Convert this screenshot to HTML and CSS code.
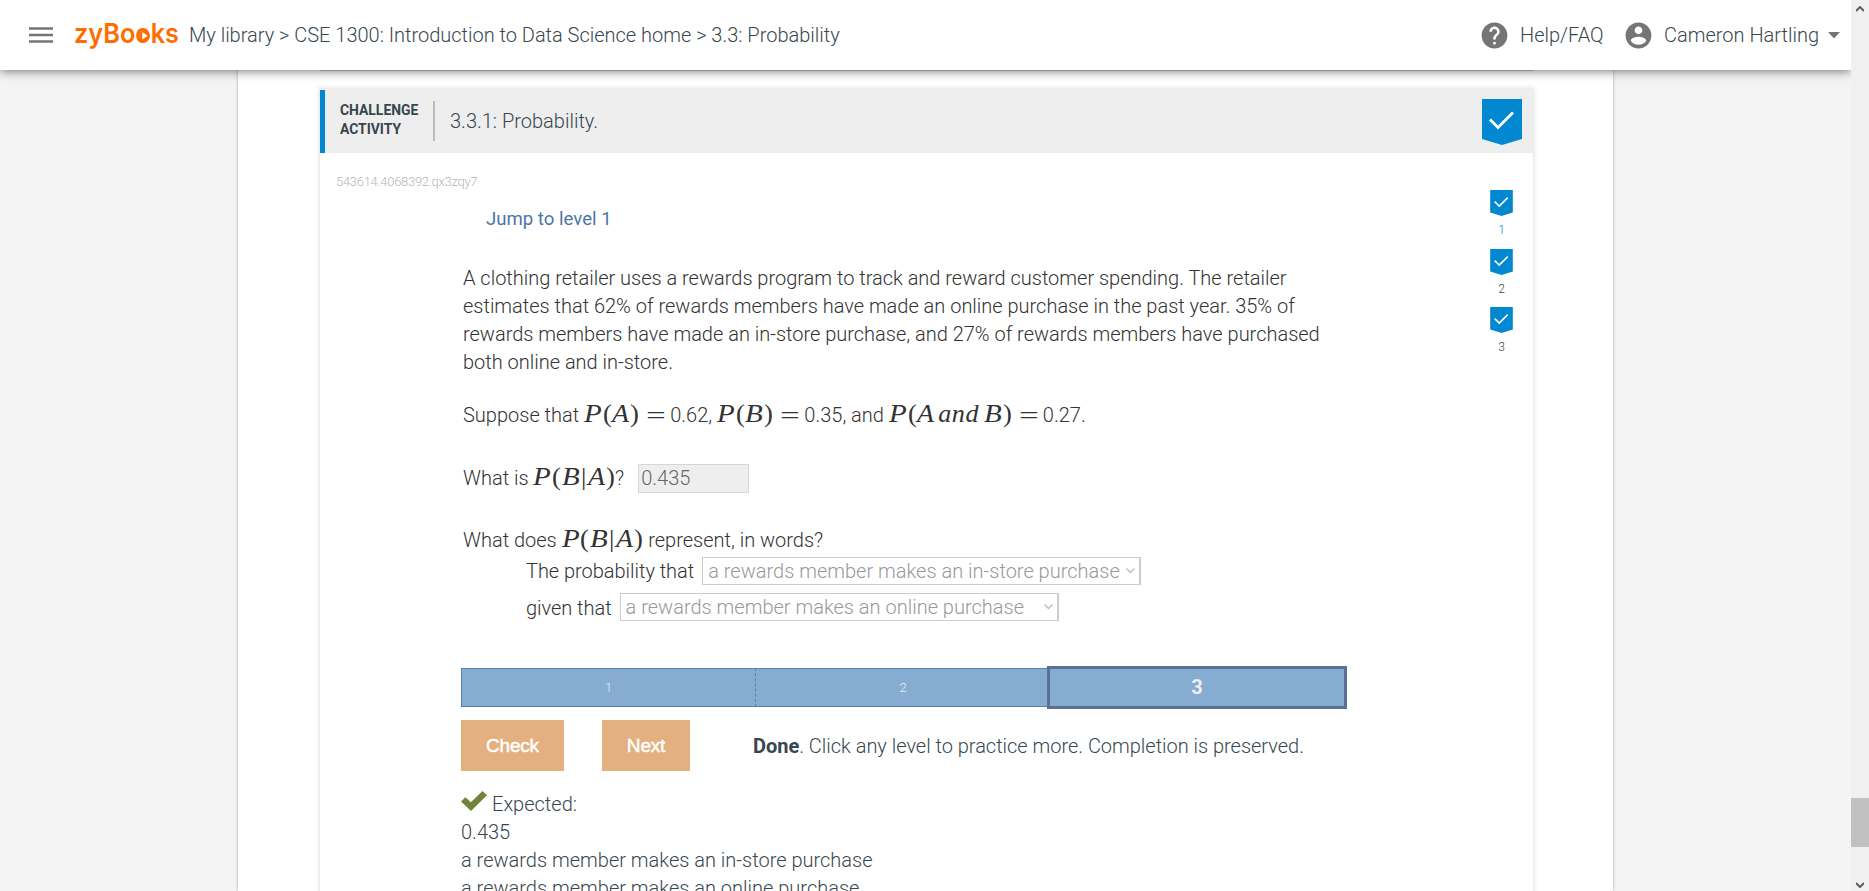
FILE: index.html
```html
<!DOCTYPE html>
<html lang="en">
<head>
<meta charset="utf-8">
<title>3.3: Probability</title>
<link rel="stylesheet" href="styles.css">
</head>
<body>
<svg width="0" height="0" class="defs">
  <symbol id="ribbon" viewBox="0 0 40 46"><path d="M0 0h40v40l-20 6-20-6z" fill="#0288d1"/><path d="M8 20.500l8 8L31 13.500" fill="none" stroke="#fff" stroke-width="2.800"/></symbol>
</svg>
<div class="app">
  <div class="view">
    <header class="topbar">
      <svg class="menu" width="24" height="16" viewBox="0 0 24 16"><path d="M0 1.500h24M0 8h24M0 14.500h24" stroke="#757575" stroke-width="2.300"/></svg>
      <svg class="logo" width="108" height="40" viewBox="0 0 108 40"><text x="0" y="28" textLength="105" lengthAdjust="spacingAndGlyphs">zyBooks</text><circle cx="70.500" cy="20.800" r="5.500" fill="#ff6d00"/><path d="M68.300 17l5.500 3.800-5.500 3.800z" fill="#fff"/></svg>
      <nav class="crumbs"><span>My library &gt; CSE 1300: Introduction to Data Science home &gt; 3.3: Probability</span></nav>
      <div class="help">
        <svg width="31" height="31" viewBox="0 0 24 24"><path fill="#757575" d="M12 2C6.480 2 2 6.480 2 12s4.480 10 10 10 10-4.480 10-10S17.520 2 12 2zm1 17h-2v-2h2v2zm2.070-7.750l-.9.920C13.450 12.900 13 13.500 13 15h-2v-.5c0-1.100.45-2.100 1.170-2.830l1.240-1.260c.37-.36.590-.86.590-1.410 0-1.100-.9-2-2-2s-2 .9-2 2H8c0-2.210 1.790-4 4-4s4 1.790 4 4c0 .88-.36 1.680-.93 2.250z"/></svg>
        <span>Help/FAQ</span>
      </div>
      <div class="user">
        <svg width="31" height="31" viewBox="0 0 24 24"><path fill="#757575" d="M12 2C6.480 2 2 6.480 2 12s4.480 10 10 10 10-4.480 10-10S17.520 2 12 2zm0 3c1.660 0 3 1.340 3 3s-1.340 3-3 3-3-1.340-3-3 1.340-3 3-3zm0 14.200c-2.500 0-4.710-1.280-6-3.220.03-1.990 4-3.080 6-3.080 1.990 0 5.970 1.090 6 3.080-1.290 1.940-3.500 3.220-6 3.220z"/></svg>
        <span>Cameron Hartling</span>
        <svg class="caret" width="12" height="7" viewBox="0 0 12 7"><path d="M0 0h12l-6 6.500z" fill="#757575"/></svg>
      </div>
    </header>
    <main class="page">
      <div class="prev"></div>
      <section class="card">
        <div class="card-head">
          <div class="kind">CHALLENGE<br>ACTIVITY</div>
          <div class="title">3.3.1: Probability.</div>
          <svg class="done-mark" width="40" height="46"><use href="#ribbon"/></svg>
        </div>
        <div class="card-body">
          <div class="work">
            <div class="serial">543614.4068392.qx3zqy7</div>
            <div class="jump">Jump to level 1</div>
            <p class="story">A clothing retailer uses a rewards program to track and reward customer spending. The retailer<br>estimates that 62% of rewards members have made an online purchase in the past year. 35% of<br>rewards members have made an in-store purchase, and 27% of rewards members have purchased<br>both online and in-store.</p>
            <div class="line suppose">Suppose that <span class="math"><i class="P">P</i><b>(</b><i class="A">A</i><b>)</b><b class="eq">=</b></span> 0.62, <span class="math"><i class="P">P</i><b>(</b><i class="B">B</i><b>)</b><b class="eq">=</b></span> 0.35, and <span class="math"><i class="P">P</i><b>(</b><i class="A">A</i><i class="and">and</i><i class="B">B</i><b>)</b><b class="eq">=</b></span> 0.27.</div>
            <div class="line whatis">What is <span class="math"><i class="P">P</i><b>(</b><i class="B">B</i><b class="bar">|</b><i class="A">A</i><b>)</b></span>?<span class="input">0.435</span></div>
            <div class="line words">What does <span class="math"><i class="P">P</i><b>(</b><i class="B">B</i><b class="bar">|</b><i class="A">A</i><b>)</b></span> represent, in words?</div>
            <div class="choice"><span>The probability that</span><div class="select"><span>a rewards member makes an in-store purchase</span><svg width="9" height="6" viewBox="0 0 9 6"><path d="M.5.5l4 4 4-4" fill="none" stroke="#bbb" stroke-width="1.300"/></svg></div></div>
            <div class="choice second"><span>given that</span><div class="select"><span>a rewards member makes an online purchase</span><svg width="9" height="6" viewBox="0 0 9 6"><path d="M.5.5l4 4 4-4" fill="none" stroke="#bbb" stroke-width="1.300"/></svg></div></div>
            <div class="levels"><div class="lv">1</div><div class="lv two">2</div><div class="lv current">3</div></div>
            <div class="actions"><div class="btn check">Check</div><div class="btn next">Next</div><div class="status"><strong>Done</strong>. Click any level to practice more. Completion is preserved.</div></div>
            <div class="result">
              <div class="expected"><svg width="26" height="20" viewBox="0 0 26 20"><path d="M0 10.500l4.500-4.300 5.300 5L21.500 0 26 4.300 10 20z" fill="#73843a"/></svg><span>Expected:</span></div>
              <div>0.435</div>
              <div>a rewards member makes an in-store purchase</div>
              <div>a rewards member makes an online purchase</div>
            </div>
          </div>
          <div class="marks">
            <div class="mark first"><svg width="23" height="26"><use href="#ribbon"/></svg><span>1</span></div>
            <div class="mark"><svg width="23" height="26"><use href="#ribbon"/></svg><span>2</span></div>
            <div class="mark"><svg width="23" height="26"><use href="#ribbon"/></svg><span>3</span></div>
          </div>
        </div>
      </section>
    </main>
  </div>
  <div class="scroll">
    <svg width="8" height="6" viewBox="0 0 8 6"><path d="M0 5l4-4 4 4" fill="none" stroke="#606060" stroke-width="2"/></svg>
    <div class="thumb"></div>
    <svg width="8" height="6" viewBox="0 0 8 6"><path d="M0 1l4 4 4-4" fill="none" stroke="#606060" stroke-width="2"/></svg>
  </div>
</div>
</body>
</html>
```
FILE: styles.css
```css
* { box-sizing: border-box; }
body { margin: 0; background: #f4f4f4; color: #37474f; font: 300 20px/28px Roboto, sans-serif; overflow: hidden; }
svg { display: block; flex: none; }
.defs { position: absolute; }
.app { display: flex; height: 891px; }
.view { width: 1851px; height: 891px; overflow: hidden; }
.topbar { position: relative; z-index: 2; height: 70px; background: #fff; box-shadow: 0 1px 10px rgba(0,0,0,.55); display: flex; align-items: center; padding-left: 29px; white-space: nowrap; }
.menu { margin-right: 21px; }
.logo { overflow: visible; }
.logo text { font: 600 27.5px Inter, sans-serif; fill: #ff6d00; }
.crumbs { width: 1293px; margin-left: 7px; letter-spacing: -.01px; }
.help, .user { display: flex; align-items: center; }
.help { width: 144px; margin-left: -3px; }
.help span { margin-left: 10px; }
.user span { margin-left: 10px; }
.caret { margin-left: 9px; }
.page { width: 1375px; height: 821px; margin-left: 238px; padding: 0 79px 0 82px; background: #fff; box-shadow: 0 0 3px rgba(0,0,0,.3); }
.prev { height: 1px; background: #ccc; margin-bottom: 18px; }
.card { height: 830px; width: 1213px; box-shadow: 0 0 4px 1px rgba(0,0,0,.13); }
.card-head { width: 1214px; height: 64px; background: linear-gradient(#0288d1, #0288d1) 0 1px / 5px 63px no-repeat #eee; display: flex; align-items: center; padding: 0 12px 0 5px; }
.kind { width: 110px; height: 40px; padding: 0 0 0 15px; border-right: 2px solid #bdbdbd; font-weight: 700; font-size: 13.9px; line-height: 19px; }
.title { flex: 1; margin-left: 15px; }
.done-mark { margin-top: 2px; }
.card-body { display: flex; }
.work { width: 1170px; padding-left: 143px; color: #333; white-space: nowrap; }
.serial { margin: 19px 0 0 -127px; font-size: 13px; letter-spacing: -.29px; line-height: 20px; color: #b5b5b5; }
.jump { margin: 13px 0 0 23px; font-weight: 400; font-size: 18.6px; color: #4d75a5; }
.story { margin: 31px 0 0; letter-spacing: -.01px; }
.line { display: flex; align-items: baseline; white-space: pre; height: 28px; }
.suppose { margin-top: 24px; }
.whatis { margin-top: 35px; }
.words { margin-top: 34px; }
.math { display: inline-flex; font: 24.2px/28px "Liberation Serif", serif; color: #333; }
.math i, .math b { display: block; font-weight: 400; transform-origin: 0 0; }
.math b { width: 9.3px; transform: scaleX(1.1); }
.math .P { width: 18.8px; transform: scaleX(1.2); }
.math .A { width: 18.2px; transform: scaleX(1.15); }
.math .B { width: 19.4px; transform: scaleX(1.2); }
.math .and { width: 48.500px; padding-left: 3px; letter-spacing: .5px; transform: scaleX(1.08); }
.math .eq { width: 19px; margin-left: 6.7px; transform: translateY(2px) scaleX(1.45); }
.math .bar { width: 6.7px; }
.input { width: 111px; height: 29px; margin-left: 14px; padding-left: 2px; background: #eee; border: 1px solid #cfd8dc; line-height: 27px; color: #666; }
.choice { display: flex; align-items: center; height: 28px; margin: 4px 0 0 63px; }
.second { margin-top: 8px; }
.select { width: 439px; height: 28px; margin-left: 8px; border: 1px solid #ccc; border-right-width: 2px; padding: 0 4px 0 5px; display: flex; align-items: center; justify-content: space-between; color: #999; line-height: 26px; }
.choice > span { letter-spacing: -.03px; }
.second > span { padding-top: 1px; }
.levels { display: flex; align-items: center; width: 886px; height: 43px; margin: 45px 0 0 -2px; font-size: 13px; color: #eee; text-align: center; }
.lv { width: 295px; height: 39px; line-height: 37px; background: #87acd2; border: 1px solid #5681aa; border-right: 1px dashed #5681aa; }
.two { width: 291px; padding-left: 3px; border-left: 0; border-right: 0; }
.current { width: 300px; height: 43px; border: 3px solid #597195; font-size: 20px; font-weight: 700; }
.actions { display: flex; height: 51px; margin: 11px 0 0 -2px; align-items: center; color: #37474f; }
.btn { height: 51px; background: #e5b07f; color: #fff; font: 400 19px/52px "Liberation Sans", sans-serif; letter-spacing: -.2px; -webkit-text-stroke: .5px #fff; text-align: center; }
.check { width: 103px; }
.next { width: 88px; margin: 0 63px 0 38px; }
.status { padding-top: 1px; letter-spacing: -.02px; }
.status strong { font-weight: 700; }
.result { margin: 19px 0 0 -2px; color: #37474f; }
.expected { display: flex; align-items: center; gap: 5px; }
.expected svg { margin-top: -6px; }
.marks { width: 23px; padding-top: 37px; font-size: 12px; }
.mark { height: 58.500px; text-align: center; }
.mark span { display: block; line-height: 18px; padding-top: 5px; height: 23px; }
.first { color: #0288d1; }
.scroll { width: 18px; height: 891px; background: #f0f0f0; display: flex; flex-direction: column; align-items: center; padding: 6px 0 3px; }
.thumb { width: 18px; height: 49px; background: #c1c1c1; margin: 786px 0 35px; }
```
